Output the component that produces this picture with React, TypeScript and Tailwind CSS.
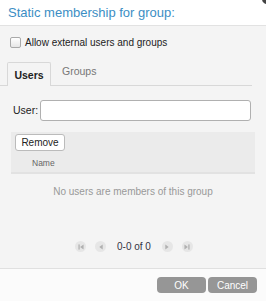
import React from 'react';

const PagerIcon: React.FC<{ kind: 'first' | 'prev' | 'next' | 'last' }> = ({ kind }) => {
  return (
    <span className="w-[11px] h-[11px] rounded-full bg-[#e6e6e6] flex items-center justify-center">
      <svg width="6" height="6" viewBox="0 0 7 7" className="fill-[#b0b0b0]">
        {kind === 'first' && (<><rect x="0.5" y="0.5" width="1.5" height="6" /><polygon points="6.5,0.5 2.5,3.5 6.5,6.5" /></>)}
        {kind === 'prev' && <polygon points="5.5,0.5 1.5,3.5 5.5,6.5" />}
        {kind === 'next' && <polygon points="1.5,0.5 5.5,3.5 1.5,6.5" />}
        {kind === 'last' && (<><polygon points="0.5,0.5 4.5,3.5 0.5,6.5" /><rect x="5" y="0.5" width="1.5" height="6" /></>)}
      </svg>
    </span>
  );
};

export default function App() {
  return (
    <div className="relative w-[266px] h-[301px] overflow-hidden bg-[#f4f4f4] flex flex-col text-[10px] text-[#222]" style={{ fontFamily: '"Liberation Sans", Arial, sans-serif' }}>
      {/* close button peeking in the corner */}
      <div className="absolute right-[-6px] top-[-6px] w-[10px] h-[10px] rounded-full bg-[#444]" />

      {/* Header */}
      <div className="h-[26px] bg-white border-b border-[#e2e2e2] flex items-center px-[8px] shrink-0">
        <h2 className="text-[13px] text-[#3b8ec4] leading-none">Static membership for group:</h2>
      </div>

      {/* Body */}
      <div className="flex-1 flex flex-col">
        <label className="flex items-center gap-[4px] mt-[10px] ml-[10px] h-[12px]">
          <span className="w-[11px] h-[11px] rounded-[2px] border border-[#a9a9a9] bg-gradient-to-b from-white to-[#e6e6e6]" />
          <span className="text-[10px]">Allow external users and groups</span>
        </label>

        {/* Tabs */}
        <div className="mt-[14px] w-[252px] flex items-end border-b border-[#d8d8d8] h-[24px]">
          <div className="ml-[7px] w-[44px] h-[24px] mb-[-1px] border border-b-0 border-[#d8d8d8] bg-[#f4f4f4] rounded-t-[2px] flex items-center justify-center pt-[2px]">
            <span className="font-bold text-[10.5px]">Users</span>
          </div>
          <div className="ml-[11px] h-[24px] flex items-center pb-[2px] text-[10.5px] text-[#777]">Groups</div>
        </div>

        {/* User input */}
        <div className="mt-[14px] flex items-center ml-[13px]">
          <span className="w-[27px] text-[10.5px]">User:</span>
          <div className="w-[211px] h-[21px] bg-white border border-[#b0b0b0] rounded-[3px]" />
        </div>

        {/* Table */}
        <div className="mt-[11px] mx-[11px] w-[244px] bg-[#ebebeb] border-b-2 border-[#e2e2e2] h-[42px] flex flex-col">
          <div className="ml-[4px] mt-[2px] w-[50px] h-[17px] bg-white border border-[#bbb] rounded-[3px] flex items-center justify-center text-[10px]">Remove</div>
          <div className="ml-[21px] mt-[6px] text-[8.5px] text-[#666]">Name</div>
        </div>

        <div className="mt-[11px] text-center text-[#999] text-[10px] leading-[14px]">No users are members of this group</div>

        {/* Pager */}
        <div className="mt-[40px] flex items-center">
          <div className="ml-[75px] flex items-center gap-[9px]">
            <PagerIcon kind="first" />
            <PagerIcon kind="prev" />
          </div>
          <span className="ml-[11px] text-[10px] text-[#334]">0-0 of 0</span>
          <div className="ml-[11px] flex items-center gap-[9px]">
            <PagerIcon kind="next" />
            <PagerIcon kind="last" />
          </div>
        </div>
      </div>

      {/* Footer */}
      <div className="h-[33px] bg-[#fbfbfb] border-t border-[#e0e0e0] flex items-start justify-end pt-[8px] pr-[9px] gap-[2px] shrink-0">
        <div className="w-[49px] h-[16px] rounded-[4px] bg-[#969696] text-white text-[10px] flex items-center justify-center">OK</div>
        <div className="w-[49px] h-[16px] rounded-[4px] bg-[#969696] text-white text-[10px] flex items-center justify-center">Cancel</div>
      </div>
    </div>
  );
}
